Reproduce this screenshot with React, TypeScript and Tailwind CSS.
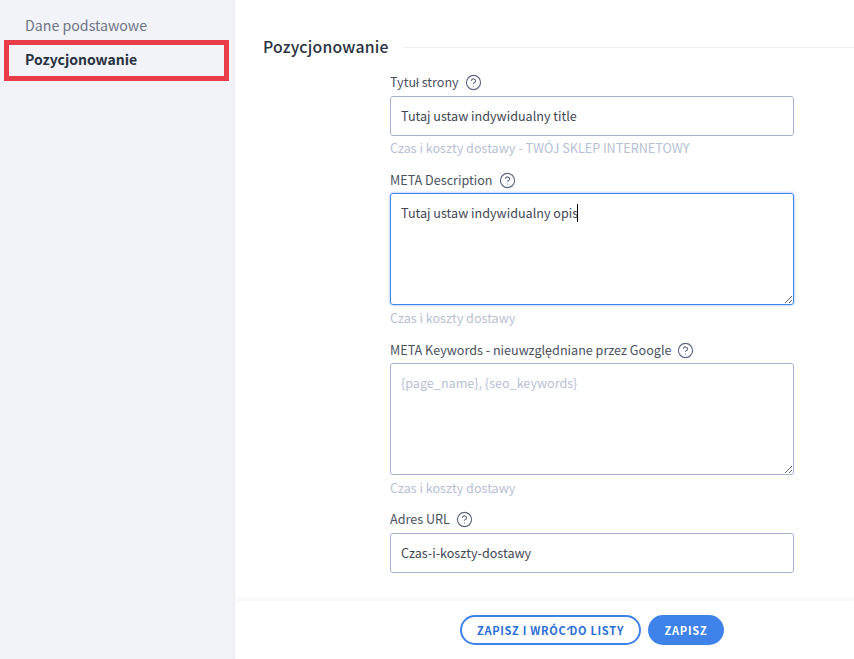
import { CircleHelp } from "lucide-react";

const font = "font-['Noto_Sans_CJK_SC','Liberation_Sans',sans-serif]";

function FieldLabel({ children }: { children: string }) {
  return (
    <div className="flex h-[20px] items-center gap-[6px] text-[12.6px] leading-[20px] text-[#4a5160]">
      <span>{children}</span>
      <CircleHelp className="h-[17px] w-[17px] text-[#5d6780]" strokeWidth={1.6} />
    </div>
  );
}

function Hint({ children }: { children: string }) {
  return <p className="mt-[3px] h-[20px] text-[12.6px] leading-[20px] text-[#b7bfd6]">{children}</p>;
}

export default function App() {
  return (
    <div className={`${font} flex h-[659px] w-full overflow-hidden bg-white`}>
      {/* Sidebar */}
      <aside className="z-10 w-[235px] shrink-0 bg-[#f1f3f8] pl-[4px] pr-[6px] pt-[14px] shadow-[inset_-3px_0_4px_-3px_rgba(0,0,0,0.06)]">
        <div className="h-[26px] pl-[21px] text-[14.2px] leading-[22px] text-[#6f7387]">Dane podstawowe</div>
        <div className="flex h-[41px] items-center border-[5px] border-[#e63d49] pb-[4px] pl-[16px] text-[14px] font-semibold leading-[22px] text-[#2a3242]">
          Pozycjonowanie
        </div>
      </aside>

      <main className="flex min-w-0 flex-1 flex-col">
        <div className="flex-1 pt-[37px]">
          {/* Section title */}
          <div className="flex h-[20px] items-center pl-[28px]">
            <h2 className="text-[15.8px] font-medium leading-[22px] tracking-[0.2px] text-[#2a3242]">Pozycjonowanie</h2>
            <div className="ml-[15px] h-px flex-1 bg-[#eceef2]" />
          </div>

          {/* Form */}
          <div className="ml-[155px] mt-[15px] w-[404px]">
            <FieldLabel>Tytuł strony</FieldLabel>
            <input
              readOnly
              defaultValue="Tutaj ustaw indywidualny title"
              className="mt-[4px] block h-[40px] w-full rounded-[3px] border border-[#a6b2d2] px-[10px] pb-[2px] text-[12.6px] text-[#3f4654] outline-none"
            />
            <p className="mt-[2px] h-[20px] text-[12.6px] leading-[20px] text-[#b7bfd6]">
              Czas i koszty dostawy - TWÓJ SKLEP INTERNETOWY
            </p>

            <div className="mt-[12px]">
              <FieldLabel>META Description</FieldLabel>
            </div>
            <div className="relative mt-[3px]">
              <textarea
                readOnly
                defaultValue="Tutaj ustaw indywidualny opis"
                className="block h-[112px] w-full rounded-[3px] border border-[#3f83ea] px-[10px] py-[9px] text-[12.6px] leading-[20px] text-[#3f4654] shadow-[0_0_3px_rgba(63,131,234,0.6)] outline-none"
              />
              <span className="absolute left-[187px] top-[11px] h-[18px] w-px bg-black" />
            </div>
            <Hint>Czas i koszty dostawy</Hint>

            <div className="mt-[12px]">
              <FieldLabel>META Keywords - nieuwzględniane przez Google</FieldLabel>
            </div>
            <textarea
              readOnly
              placeholder="{page_name}, {seo_keywords}"
              className="mt-[3px] block h-[112px] w-full rounded-[3px] border border-[#a6b2d2] px-[10px] py-[9px] text-[12.6px] leading-[20px] outline-none placeholder:text-[#b7bfd6]"
            />
            <Hint>Czas i koszty dostawy</Hint>

            <div className="mt-[11px]">
              <FieldLabel>Adres URL</FieldLabel>
            </div>
            <input
              readOnly
              defaultValue="Czas-i-koszty-dostawy"
              className="mt-[4px] block h-[40px] w-full rounded-[3px] border border-[#a6b2d2] px-[10px] pb-[2px] text-[12.6px] text-[#3f4654] outline-none"
            />
          </div>
        </div>

        {/* Footer actions */}
        <footer className="flex h-[58px] shrink-0 justify-center gap-[7px] bg-white pl-[95px] pt-[14px] shadow-[0_-3px_5px_rgba(0,0,0,0.035)]">
          <button className="h-[30px] w-[181px] rounded-full border-2 border-[#3f83ea] text-[11px] font-semibold leading-none tracking-[0.7px] text-[#2b6fd6] [font-kerning:none]">
            ZAPISZ I WRÓĆ DO LISTY
          </button>
          <button className="h-[30px] w-[76px] rounded-full bg-[#3f83ea] text-[11px] font-semibold leading-none tracking-[0.77px] text-white">
            ZAPISZ
          </button>
        </footer>
      </main>
    </div>
  );
}
